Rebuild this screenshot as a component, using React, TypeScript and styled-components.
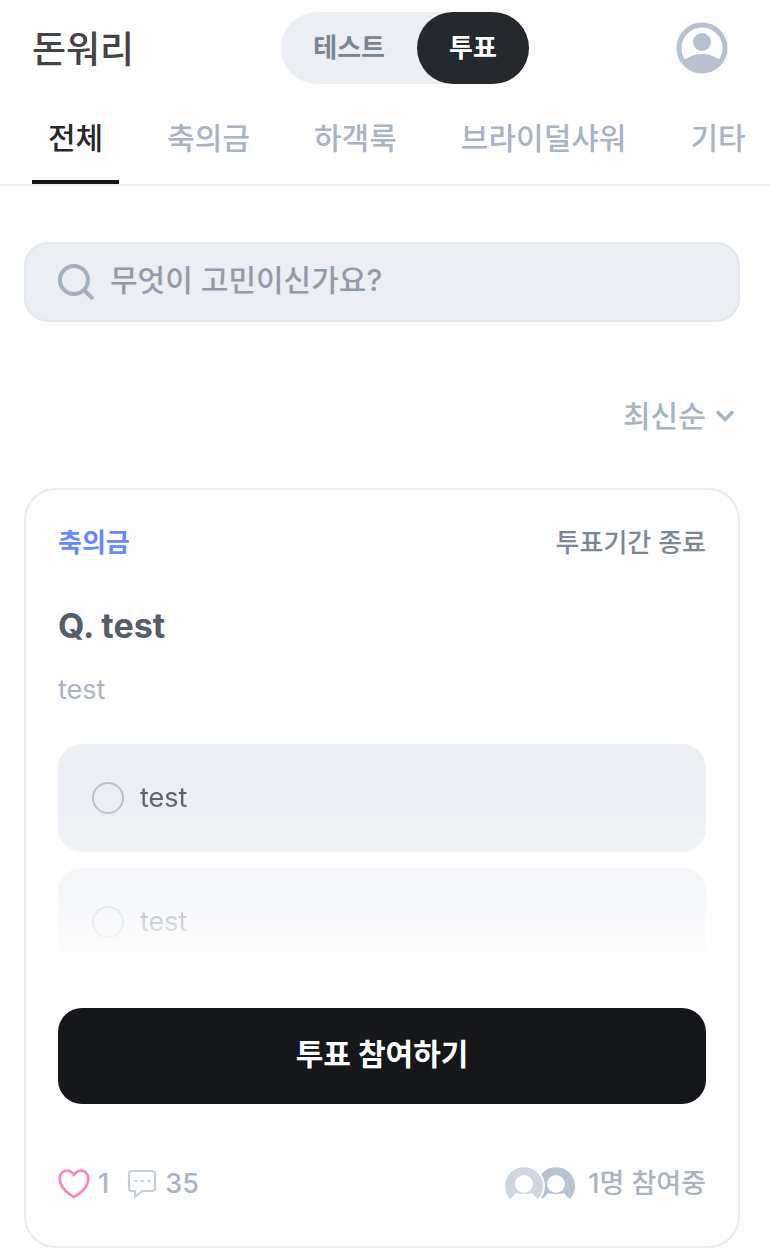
import React, { useState } from "react";
import styled, { createGlobalStyle } from "styled-components";

const GlobalStyle = createGlobalStyle`
  *, *::before, *::after { box-sizing: border-box; }
  body {
    margin: 0;
    background: #fefefe;
    font-family: Inter, "Noto Sans CJK KR", sans-serif;
    color: #555d69;
  }
  button, input, select { font-family: inherit; }
  h2, p { margin: 0; }
`;

const Header = styled.header`
  display: flex;
  align-items: center;
  justify-content: space-between;
  padding: 12px 42px 0 32px;
`;

const Logo = styled.a`
  padding-top: 4px;
  font-size: 37px;
  line-height: 48px;
  font-weight: 500;
  color: #444444;
  text-decoration: none;
`;

const Toggle = styled.nav`
  display: flex;
  border-radius: 36px;
  background: #ebeef3;
`;

const ToggleButton = styled.button<{ $active?: boolean }>`
  height: 72px;
  padding: 0 32px;
  border: 0;
  border-radius: 36px;
  background: ${(p) => (p.$active ? "#25282d" : "transparent")};
  color: ${(p) => (p.$active ? "#ffffff" : "#788494")};
  font-size: 26px;
  line-height: 36px;
  font-weight: 700;
`;

const ProfileButton = styled.button`
  display: flex;
  padding: 0;
  border: 0;
  background: none;
`;

const Tabs = styled.nav`
  display: flex;
  gap: 32px;
  height: 102px;
  padding: 0 0 0 32px;
  overflow: hidden;
  border-bottom: 2px solid #e9edf2;
`;

const Tab = styled.button<{ $active?: boolean }>`
  flex: none;
  padding: 12px 16px 0;
  border: 0;
  border-bottom: 4px solid ${(p) => (p.$active ? "#15171a" : "transparent")};
  background: none;
  color: ${(p) => (p.$active ? "#25282d" : "#a9b4c3")};
  font-size: 30px;
  line-height: 40px;
  font-weight: 500;
`;

const Main = styled.main`
  display: flex;
  flex-direction: column;
  padding: 56px 30px 0 24px;
`;

const SearchBox = styled.label`
  display: flex;
  align-items: center;
  gap: 16px;
  height: 80px;
  padding: 0 32px;
  border: 2px solid #e2e8ef;
  border-radius: 24px;
  background: #ebeef3;
`;

const SearchInput = styled.input`
  flex: 1;
  min-width: 0;
  padding: 0 0 4px;
  border: 0;
  outline: 0;
  background: none;
  color: #555d69;
  font-size: 30px;
  line-height: 40px;
  font-weight: 500;
  &::placeholder { color: #919cab; opacity: 1; }
`;

const Sort = styled.div`
  display: grid;
  align-self: flex-end;
  align-items: center;
  margin: 72px 6px 50px 0;
  > * { grid-area: 1 / 1; }
  svg { justify-self: end; pointer-events: none; }
`;

const SortSelect = styled.select`
  appearance: none;
  padding: 0 28px 0 0;
  border: 0;
  background: none;
  color: #a9b4c3;
  font-size: 30px;
  line-height: 44px;
  font-weight: 500;
`;

const Card = styled.article`
  padding: 32px 32px 44px;
  border: 2px solid #e8ecf2;
  border-radius: 32px;
`;

const CardTop = styled.div`
  display: flex;
  align-items: center;
  justify-content: space-between;
  font-size: 26px;
  line-height: 42px;
`;

const Category = styled.span`
  color: #6788ff;
  font-weight: 700;
`;

const Status = styled.span`
  color: #7c8796;
  font-weight: 500;
`;

const Question = styled.h2`
  margin-top: 38px;
  font-size: 34px;
  line-height: 48px;
  font-weight: 700;
`;

const Description = styled.p`
  margin-top: 22px;
  color: #a9b4c3;
  font-size: 27px;
  line-height: 36px;
`;

const Options = styled.div`
  display: flex;
  flex-direction: column;
  gap: 16px;
  margin-top: 36px;
  mask-image: linear-gradient(#000 56px, transparent 224px);
`;

const Option = styled.label`
  display: flex;
  align-items: center;
  gap: 16px;
  height: 108px;
  padding: 0 34px;
  border-radius: 24px;
  background: #ebeef3;
  color: #5b646f;
  font-size: 27px;
  line-height: 36px;
`;

const Radio = styled.input`
  appearance: none;
  width: 32px;
  height: 32px;
  margin: 0;
  border: 2px solid #b5c0cf;
  border-radius: 50%;
  &:checked { border-width: 10px; }
`;

const VoteButton = styled.button`
  width: 100%;
  height: 96px;
  margin-top: 32px;
  padding: 0 0 4px;
  border: 0;
  border-radius: 24px;
  background: #15171a;
  color: #ffffff;
  font-size: 30px;
  line-height: 40px;
  font-weight: 700;
`;

const CardBottom = styled.footer`
  display: flex;
  align-items: center;
  justify-content: space-between;
  margin-top: 62px;
  color: #a9b4c3;
  font-size: 27px;
  line-height: 36px;
  font-weight: 500;
`;

const Stats = styled.div`
  display: flex;
  gap: 18px;
`;

const Stat = styled.button`
  display: flex;
  align-items: center;
  gap: 8px;
  padding: 0;
  border: 0;
  background: none;
  color: inherit;
  font-size: inherit;
  line-height: inherit;
  font-weight: inherit;
`;

const Participants = styled.div`
  display: flex;
  align-items: center;
  gap: 12px;
`;

const ProfileIcon = () => (
  <svg width="52" height="52" viewBox="0 0 52 52" aria-hidden="true">
    <clipPath id="profile"><circle cx="26" cy="26" r="25" /></clipPath>
    <circle cx="26" cy="26" r="23" fill="none" stroke="#b7c2d1" strokeWidth="5" />
    <circle cx="26" cy="20" r="9" fill="#b7c2d1" />
    <ellipse cx="26" cy="47" rx="22" ry="15" fill="#b7c2d1" clipPath="url(#profile)" />
  </svg>
);

const SearchIcon = () => (
  <svg width="36" height="36" viewBox="0 0 36 36" fill="none" stroke="#a4b0c0" strokeWidth="4" aria-hidden="true">
    <circle cx="16" cy="16" r="14" />
    <path d="M26 26l9 9" />
  </svg>
);

const ChevronIcon = () => (
  <svg width="18" height="12" viewBox="0 0 18 12" fill="none" stroke="#a9b4c3" strokeWidth="3.5" aria-hidden="true">
    <path d="M1 1.500l8 8 8-8" />
  </svg>
);

const HeartIcon = () => (
  <svg width="32" height="30" viewBox="0 0 32 30" fill="none" stroke="#f58cc0" strokeWidth="2.800" strokeLinejoin="round" aria-hidden="true">
    <path d="M16 6C13 1 8.500 1 5.500 2.500C1.500 5 1.200 9.500 2.500 14C4.500 20 10.500 25 16 28C21.500 25 27.500 20 29.500 14C30.800 9.500 30.500 5 26.500 2.500C23.500 1 19 1 16 6Z" />
  </svg>
);

const CommentIcon = () => (
  <svg width="30" height="30" viewBox="0 0 30 30" fill="none" stroke="#c3cddb" strokeWidth="2.200" strokeLinejoin="round" aria-hidden="true">
    <path d="M5 2H25Q28 2 28 5V19Q28 22 25 22H15L8 28V22H5Q2 22 2 19V5Q2 2 5 2Z" />
    <path d="M7 12h4M13 12h4M20 12h4" strokeWidth="1.500" />
  </svg>
);

const Person = ({ x, color }: { x: number; color: string }) => (
  <g transform={`translate(${x} 0)`}>
    <circle cx="20" cy="20" r="21" fill="#fefefe" />
    <path d="M6 33A19 19 0 1 1 34 33Q29 27 20 27Q11 27 6 33Z" fill={color} />
    <circle cx="20" cy="18" r="9" fill="#fefefe" />
    <path d="M12 27Q20 31 28 27L31 31Q20 28 9 31Z" fill="#fefefe" />
    <path d="M14 26Q20 29 26 26" fill="none" stroke={color} strokeWidth="1.200" />
  </g>
);

const PeopleIcon = () => (
  <svg width="72" height="36" viewBox="0 0 72 36" aria-hidden="true">
    <Person x={32} color="#b7c3d1" />
    <Person x={0} color="#cdd6e1" />
  </svg>
);

const categories = ["전체", "축의금", "하객룩", "브라이덜샤워", "기타"];
const options = ["test", "test"];

export default function App() {
  const [category, setCategory] = useState("전체");

  return (
    <>
      <GlobalStyle />
      <Header>
        <Logo href="#">돈워리</Logo>
        <Toggle>
          <ToggleButton>테스트</ToggleButton>
          <ToggleButton $active>투표</ToggleButton>
        </Toggle>
        <ProfileButton aria-label="프로필"><ProfileIcon /></ProfileButton>
      </Header>
      <Tabs>
        {categories.map((name) => (
          <Tab key={name} $active={name === category} onClick={() => setCategory(name)}>
            {name}
          </Tab>
        ))}
      </Tabs>
      <Main>
        <SearchBox>
          <SearchIcon />
          <SearchInput type="text" aria-label="검색" placeholder="무엇이 고민이신가요?" />
        </SearchBox>
        <Sort>
          <SortSelect aria-label="정렬">
            <option>최신순</option>
          </SortSelect>
          <ChevronIcon />
        </Sort>
        <Card>
          <CardTop>
            <Category>축의금</Category>
            <Status>투표기간 종료</Status>
          </CardTop>
          <Question>Q. test</Question>
          <Description>test</Description>
          <Options>
            {options.map((text, index) => (
              <Option key={index}>
                <Radio type="radio" name="vote" />
                {text}
              </Option>
            ))}
          </Options>
          <VoteButton>투표 참여하기</VoteButton>
          <CardBottom>
            <Stats>
              <Stat aria-label="좋아요 1"><HeartIcon />1</Stat>
              <Stat aria-label="댓글 35"><CommentIcon />35</Stat>
            </Stats>
            <Participants>
              <PeopleIcon />
              1명 참여중
            </Participants>
          </CardBottom>
        </Card>
      </Main>
    </>
  );
}
